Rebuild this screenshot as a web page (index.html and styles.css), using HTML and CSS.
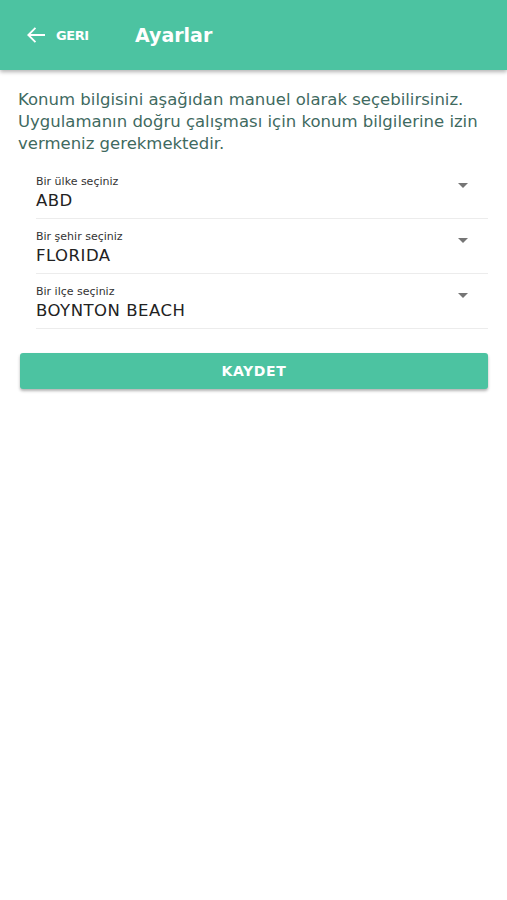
FILE: index.html
```html
<!DOCTYPE html>
<html lang="tr">
<head>
<meta charset="utf-8">
<link rel="stylesheet" href="styles.css">
</head>
<body>
<header class="appbar">
  <div class="back">
    <svg class="back-icon" width="24" height="24" viewBox="0 0 24 24"><path d="M21 10.9H6.7l5.4-5.4-1.3-1.3L3 12l7.8 7.8 1.3-1.3-5.4-5.4H21z" fill="#fff"/></svg>
    <span class="back-text">GERI</span>
  </div>
  <h1 class="title">Ayarlar</h1>
</header>
<main class="content">
  <p class="intro">Konum bilgisini aşağıdan manuel olarak seçebilirsiniz. Uygulamanın doğru çalışması için konum bilgilerine izin vermeniz gerekmektedir.</p>
  <div class="fields">
    <div class="field">
      <div class="field-text">
        <span class="label">Bir ülke seçiniz</span>
        <span class="value">ABD</span>
      </div>
      <span class="caret"></span>
    </div>
    <div class="field">
      <div class="field-text">
        <span class="label">Bir şehir seçiniz</span>
        <span class="value">FLORIDA</span>
      </div>
      <span class="caret"></span>
    </div>
    <div class="field">
      <div class="field-text">
        <span class="label">Bir ilçe seçiniz</span>
        <span class="value">BOYNTON BEACH</span>
      </div>
      <span class="caret"></span>
    </div>
  </div>
  <button class="save">KAYDET</button>
</main>
</body>
</html>
```

FILE: styles.css
```css
* { box-sizing: border-box; }
html, body { margin: 0; padding: 0; background: #fff; }
body { font-family: "DejaVu Sans", "Liberation Sans", sans-serif; width: 507px; height: 900px; overflow: hidden; }

.appbar {
  height: 70px;
  background: #4cc3a1;
  display: flex;
  align-items: center;
  padding-left: 24px;
  box-shadow: 0 2px 4px rgba(0,0,0,0.3);
}
.back { display: flex; align-items: center; gap: 8px; width: 111px; }
.back-icon { display: block; }
.back-text { color: #fff; font-weight: bold; font-size: 13px; letter-spacing: -0.4px; }
.title { margin: 0; color: #fff; font-size: 19px; font-weight: bold; }

.content { padding: 19px 19px 0 20px; }
.intro {
  margin: 0;
  color: #3f6a5f;
  font-size: 16.5px;
  line-height: 22px;
  margin-left: -2px;
}
.fields { margin: 9px 0 0 16px; }
.field {
  height: 55px;
  border-bottom: 1px solid #ececec;
  display: flex;
  align-items: center;
  padding-right: 20px;
}
.field-text { flex: 1; display: flex; flex-direction: column; padding-top: 4px; }
.label { font-size: 11px; color: #333; line-height: 14px; }
.value { font-size: 16.5px; color: #222; line-height: 22px; letter-spacing: 0.5px; margin-top: 1px; }
.caret {
  width: 0; height: 0;
  border-left: 5px solid transparent;
  border-right: 5px solid transparent;
  border-top: 5px solid #757575;
  margin-top: -12px;
}
.save {
  display: block;
  width: 468px;
  height: 36px;
  margin-top: 24px;
  border: none;
  border-radius: 3px;
  background: #4cc3a1;
  color: #fff;
  font-family: "DejaVu Sans", "Liberation Sans", sans-serif;
  font-weight: bold;
  font-size: 14px;
  letter-spacing: 0.6px;
  box-shadow: 0 2px 3px rgba(0,0,0,0.3);
}
```
